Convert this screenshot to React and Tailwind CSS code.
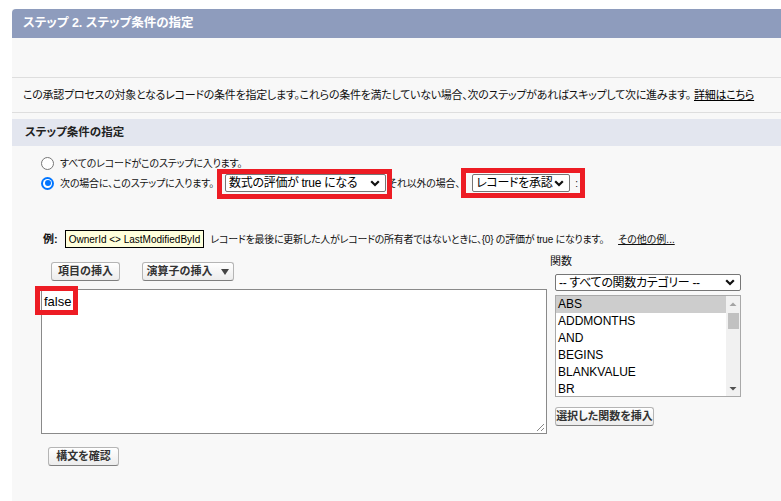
import React from "react";

const FUNCS = ["ABS", "ADDMONTHS", "AND", "BEGINS", "BLANKVALUE", "BR"];

const Chevron = () => (
  <svg width="10" height="7" viewBox="0 0 10 7" className="shrink-0">
    <path d="M1.2 1.2 L5 5 L8.8 1.2" fill="none" stroke="#111" strokeWidth="2.2" />
  </svg>
);

const FakeSelect = ({ label, className }) => (
  <div
    className={`flex items-center justify-between bg-white border border-[#767676] rounded-[2px] pl-[3px] pr-[5px] text-[12px] leading-none text-black tracking-[-0.3px] ${className}`}
  >
    <span className="whitespace-nowrap">{label}</span>
    <Chevron />
  </div>
);

const Btn = ({ children, className }) => (
  <div
    className={`inline-flex items-center justify-center h-[19px] border border-[#b5b5b5] border-b-[#7f7f7f] rounded-[3px] bg-linear-to-b from-white to-[#ececec] text-[11px] font-bold text-[#333] whitespace-nowrap ${className}`}
  >
    {children}
  </div>
);

// red annotation frame laid over an element
const RedBox = ({ className }) => (
  <span className={`absolute border-[5px] border-[#ed1c24] pointer-events-none ${className}`} />
);

const Radio = ({ checked }) =>
  checked ? (
    <span className="w-[13px] h-[13px] rounded-full bg-[#0075ff] flex items-center justify-center shrink-0">
      <span className="w-[9px] h-[9px] rounded-full bg-white flex items-center justify-center">
        <span className="w-[6px] h-[6px] rounded-full bg-[#0075ff]" />
      </span>
    </span>
  ) : (
    <span className="w-[13px] h-[13px] rounded-full bg-white border border-[#767676] shrink-0" />
  );

const ListBox = () => (
  <div className="mt-[4px] ml-[5px] w-[186px] h-[102px] bg-white border border-[#a9a9a9] flex">
    <div className="flex-1 text-[12px] font-['Liberation_Sans',sans-serif] text-black">
      {FUNCS.map((f, i) => (
        <div
          key={f}
          className={`h-[17px] leading-[17px] pl-[2px] ${i === 0 ? "bg-[#cdcdcd]" : ""}`}
        >
          {f}
        </div>
      ))}
    </div>
    <div className="w-[14px] bg-[#f1f1f1] flex flex-col items-center">
      <svg width="8" height="14" viewBox="0 0 8 14" className="mt-[1px]">
        <path d="M0.5 9 L4 5.5 L7.5 9 Z" fill="#a3a3a3" />
      </svg>
      <div className="w-[11px] h-[16px] bg-[#c1c1c1] mt-[2px]" />
      <div className="flex-1" />
      <svg width="8" height="14" viewBox="0 0 8 14">
        <path d="M0.5 5 L4 8.5 L7.5 5 Z" fill="#505050" />
      </svg>
    </div>
  </div>
);

export default function App() {
  return (
    <div className="w-[781px] h-[501px] overflow-hidden bg-white pt-[9px] pl-[12px] font-['Liberation_Sans','Noto_Sans_CJK_JP',sans-serif] [font-feature-settings:'palt'] text-[#111]">
      <div className="bg-[#f8f8f8] h-[492px]">
        <div className="h-[29px] bg-[#8e9cbd] rounded-tl-[4px] pl-[11px] flex items-center text-white font-bold text-[12.5px]">
          ステップ 2. ステップ条件の指定
        </div>
        <div className="h-[40px] border-b border-[#dedede]" />
        <div className="h-[35px] border-b border-[#dedede] pl-[11px] flex items-center text-[11px] tracking-[-0.27px] whitespace-nowrap">
          この承認プロセスの対象となるレコードの条件を指定します。これらの条件を満たしていない場合、次のステップがあればスキップして次に進みます。
          <a className="ml-[3px] underline text-black">詳細はこちら</a>
        </div>
        <div className="mt-[6px] h-[27px] bg-[#e3e6ef] pl-[13px] flex items-center font-bold text-[11.5px] text-[#222]">
          ステップ条件の指定
        </div>

        <div className="pl-[29px] pt-[8px] text-[10px] tracking-[-0.2px] whitespace-nowrap">
          <div className="h-[18px] flex items-center">
            <Radio />
            <span className="ml-[6px]">すべてのレコードがこのステップに入ります。</span>
          </div>
          <div className="mt-[1px] h-[20px] flex items-center">
            <Radio checked />
            <span className="ml-[6px]">次の場合に、このステップに入ります。</span>
            <span className="relative ml-[11px]">
              <FakeSelect label="数式の評価が true になる" className="w-[161px] h-[18px]" />
              <RedBox className="-left-[8px] -right-[6px] -top-[5px] -bottom-[7px]" />
            </span>
            <span className="ml-[2px]">それ以外の場合、</span>
            <span className="relative ml-[12px] flex items-center">
              <FakeSelect label="レコードを承認" className="w-[98px] h-[18px]" />
              <span className="ml-[5px]">:</span>
              <RedBox className="-left-[11px] -right-[7px] -top-[6px] -bottom-[6px]" />
            </span>
          </div>
        </div>

        <div className="mt-[37px] pl-[31px] h-[18px] flex items-center text-[10px] whitespace-nowrap">
          <span className="font-bold text-[11px]">例:</span>
          <span className="ml-[7px] h-[18px] px-[3px] flex items-center bg-[#ffffdc] border border-black font-['Liberation_Sans',sans-serif] text-[10px] text-black">
            OwnerId &lt;&gt; LastModifiedById
          </span>
          <span className="ml-[6px] tracking-[-0.25px]">
            レコードを最後に更新した人がレコードの所有者ではないときに、{"{0}"} の評価が true になります。
          </span>
          <a className="ml-[14px] underline">その他の例...</a>
        </div>

        <div className="flex pl-[29px]">
          <div className="w-[506px]">
            <div className="mt-[14px] pl-[10px] flex">
              <Btn className="w-[69px]">項目の挿入</Btn>
              <Btn className="ml-[22px] w-[92px]">
                演算子の挿入
                <svg width="8" height="6" viewBox="0 0 8 6" className="ml-[9px]">
                  <path d="M0 0 L8 0 L4 6 Z" fill="#444" />
                </svg>
              </Btn>
            </div>
            <div className="relative mt-[8px] h-[145px] bg-white border border-[#8a8a8a] pl-[2px] pt-[2px] text-[13px] font-['Liberation_Sans',sans-serif] text-black">
              false
              <RedBox className="-left-[7px] -top-[4px] w-[43px] h-[29px]" />
              <svg width="10" height="10" viewBox="0 0 10 10" className="absolute right-[1px] bottom-[1px]">
                <path d="M9 2 L2 9 M9 6 L6 9" stroke="#888" strokeWidth="1" />
              </svg>
            </div>
            <div className="mt-[9px] pl-[7px]">
              <Btn className="w-[71px]">構文を確認</Btn>
            </div>
          </div>

          <div className="ml-[3px] pt-[7px]">
            <div className="h-[13px] leading-[13px] text-[11px]">関数</div>
            <FakeSelect label="-- すべての関数カテゴリー --" className="mt-[6px] ml-[5px] w-[186px] h-[17px]" />
            <ListBox />
            <div className="mt-[6px] ml-[5px]">
              <Btn className="w-[99px]">選択した関数を挿入</Btn>
            </div>
          </div>
        </div>
      </div>
    </div>
  );
}
